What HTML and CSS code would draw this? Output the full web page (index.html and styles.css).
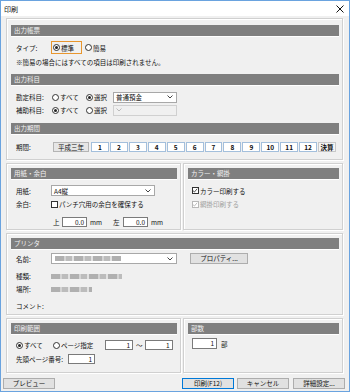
FILE: index.html
```html
<!DOCTYPE html>
<html lang="ja">
<head>
  <meta charset="UTF-8" />
  <title>印刷</title>
  <link rel="stylesheet" href="styles.css">
</head>
<body>
<div class="window">
  <div class="titlebar">
    <span class="title">印刷</span>
    <svg class="close" width="8" height="8" viewBox="0 0 8 8"><path d="M0.5 0.5 L7.5 7.5 M7.5 0.5 L0.5 7.5" stroke="#111" stroke-width="1"/></svg>
  </div>

  <div class="client">
    <!-- 出力帳票 / 出力科目 / 出力期間 -->
    <div class="frame top">
      <div class="bar">出力帳票</div>
      <div class="row r-type">
        <span class="lbl">タイプ:</span>
        <span class="focus"><span class="radio on"></span>標準</span>
        <span class="opt o-easy"><span class="radio"></span>簡易</span>
      </div>
      <div class="row r-note">※簡易の場合にはすべての項目は印刷されません。</div>

      <div class="bar b2">出力科目</div>
      <div class="row r-acc">
        <span class="lbl l-acc">勘定科目:</span>
        <span class="opt o-all"><span class="radio"></span>すべて</span>
        <span class="opt o-sel"><span class="radio on"></span>選択</span>
        <span class="select s-acc">普通預金<svg class="chev" width="6" height="4" viewBox="0 0 6 4"><path d="M0.5 0.5 L3 3 L5.5 0.5" fill="none" stroke="#444"/></svg></span>
      </div>
      <div class="row r-sub">
        <span class="lbl l-acc">補助科目:</span>
        <span class="opt o-all"><span class="radio on"></span>すべて</span>
        <span class="opt o-sel"><span class="radio"></span>選択</span>
        <span class="select s-acc off"><svg class="chev" width="6" height="4" viewBox="0 0 6 4"><path d="M0.5 0.5 L3 3 L5.5 0.5" fill="none" stroke="#bbb"/></svg></span>
      </div>

      <div class="bar b2">出力期間</div>
      <div class="row r-period">
        <span class="lbl l-period">期間:</span>
        <span class="pbtn year">平成三年</span>
        <div class="months">
          <span class="pbtn">1</span>
          <span class="pbtn">2</span>
          <span class="pbtn">3</span>
          <span class="pbtn">4</span>
          <span class="pbtn">5</span>
          <span class="pbtn">6</span>
          <span class="pbtn">7</span>
          <span class="pbtn">8</span>
          <span class="pbtn">9</span>
          <span class="pbtn">10</span>
          <span class="pbtn">11</span>
          <span class="pbtn">12</span>
          <span class="pbtn final">決算</span>
        </div>
      </div>
    </div>

    <!-- 用紙・余白 / カラー・網掛 -->
    <div class="pair p-paper">
      <div class="group g-left">
        <div class="bar">用紙・余白</div>
        <div class="row r-paper">
          <span class="lbl">用紙:</span>
          <span class="select s-paper">A4縦<svg class="chev" width="6" height="4" viewBox="0 0 6 4"><path d="M0.5 0.5 L3 3 L5.5 0.5" fill="none" stroke="#444"/></svg></span>
        </div>
        <div class="row r-margin">
          <span class="lbl">余白:</span>
          <span class="check"></span>パンチ穴用の余白を確保する
        </div>
        <div class="row r-mm">
          <span class="unit u-top">上</span>
          <span class="box b-mm">0.0</span>
          <span class="mm">mm</span>
          <span class="unit u-left">左</span>
          <span class="box b-mm">0.0</span>
          <span class="mm">mm</span>
        </div>
      </div>
      <div class="group g-right">
        <div class="bar">カラー・網掛</div>
        <div class="row r-color">
          <span class="check on"><svg width="7" height="7" viewBox="0 0 7 7"><path d="M1 3.5 L2.8 5.3 L6 1.5" fill="none" stroke="#222" stroke-width="0.9"/></svg></span>カラー印刷する
        </div>
        <div class="row r-shade dim">
          <span class="check on off"><svg width="7" height="7" viewBox="0 0 7 7"><path d="M1 3.5 L2.8 5.3 L6 1.5" fill="none" stroke="#aaa" stroke-width="0.9"/></svg></span>網掛印刷する
        </div>
      </div>
    </div>

    <!-- プリンタ -->
    <div class="group g-printer">
      <div class="bar">プリンタ</div>
      <div class="row r-name">
        <span class="lbl">名前:</span>
        <span class="select s-printer"><span class="blur bl-name"></span><svg class="chev" width="6" height="4" viewBox="0 0 6 4"><path d="M0.5 0.5 L3 3 L5.5 0.5" fill="none" stroke="#444"/></svg></span>
        <span class="btn b-prop">プロパティ...</span>
      </div>
      <div class="row r-kind">
        <span class="lbl">種類:</span>
        <span class="blur bl-kind"></span>
      </div>
      <div class="row r-place">
        <span class="lbl">場所:</span>
        <span class="blur bl-place"></span>
      </div>
      <div class="row r-comment">
        <span class="lbl">コメント:</span>
      </div>
    </div>

    <!-- 印刷範囲 / 部数 -->
    <div class="pair p-range">
      <div class="group g-left">
        <div class="bar">印刷範囲</div>
        <div class="row r-range">
          <span class="opt o-every"><span class="radio on"></span>すべて</span>
          <span class="opt o-page"><span class="radio"></span>ページ指定</span>
          <span class="box b-page">1</span>
          <span class="tilde">～</span>
          <span class="box b-page">1</span>
        </div>
        <div class="row r-first">
          <span class="lbl l-first">先頭ページ番号:</span>
          <span class="box b-first">1</span>
        </div>
      </div>
      <div class="group g-right">
        <div class="bar">部数</div>
        <div class="row r-copies">
          <span class="box b-copies">1</span>
          <span class="bu">部</span>
        </div>
      </div>
    </div>

    <div class="footer">
      <span class="btn b-preview">プレビュー</span>
      <span class="spacer"></span>
      <span class="btn b-print">印刷(F12)</span>
      <span class="btn b-cancel">キャンセル</span>
      <span class="btn b-detail">詳細設定...</span>
    </div>
  </div>
</div>
</body>
</html>
```

FILE: styles.css
```css
* {
  box-sizing: border-box;
}
body {
  margin: 0;
  font-family: "Noto Sans CJK JP", "Noto Sans", sans-serif;
  font-size: 6.5px;
  color: #111;
}
.window {
  width: 350px;
  height: 392px;
  border: 1px solid #6aa3df;
  background: #f0f0f0;
  display: flex;
  flex-direction: column;
}
.titlebar {
  height: 15px;
  background: #fff;
  display: flex;
  align-items: center;
  justify-content: space-between;
  padding: 0 5px 0 3px;
}
.title {
  font-size: 7px;
}
.client {
  flex: 1;
  padding: 2px 6px 0 5px;
}

/* frames and group boxes */
.frame, .group {
  border: 1px solid #d0d0d0;
  box-shadow: inset 1px 1px 0 #fff, 1px 1px 0 #fff;
}
.frame.top {
  height: 142px;
  padding: 6px 3px 0 4px;
}
.group {
  padding: 4px 3px 0 4px;
}
.pair {
  display: flex;
  gap: 2px;
  margin-top: 3px;
}
.g-left {
  width: 175px;
}
.g-right {
  flex: 1;
}
.p-paper .group {
  height: 67px;
}
.g-printer {
  margin-top: 3px;
  height: 82px;
}
.p-range .group {
  height: 55px;
}
.bar {
  height: 11px;
  line-height: 11px;
  background: #7f7f7f;
  color: #f2f2f2;
  padding-left: 3px;
  box-shadow: 0 1px 0 #fff;
}
.bar.b2 {
  margin-top: 7px;
}

/* rows */
.row {
  display: flex;
  align-items: center;
  padding-left: 5px;
  white-space: nowrap;
}
.g-right .row {
  padding-left: 4px;
}
.lbl {
  width: 35px;
  flex: none;
}
.l-acc {
  width: 36px;
}
.l-period {
  width: 37px;
}
.l-first {
  width: 52px;
}
.r-type {
  height: 13px;
  margin-top: 5px;
}
.r-note {
  height: 10px;
  margin-top: 3px;
}
.r-acc {
  height: 12px;
  margin-top: 6px;
}
.r-sub {
  height: 12px;
  margin-top: 1px;
}
.r-period {
  height: 10px;
  margin-top: 8px;
}
.r-paper, .r-color {
  height: 11px;
  margin-top: 6px;
}
.r-margin, .r-shade {
  height: 10px;
  margin-top: 3px;
}
.r-mm {
  height: 10px;
  margin-top: 8px;
}
.r-name {
  height: 11px;
  margin-top: 4px;
}
.r-kind {
  height: 10px;
  margin-top: 7px;
}
.r-place {
  height: 10px;
  margin-top: 3px;
}
.r-comment {
  height: 10px;
  margin-top: 7px;
}
.r-range {
  height: 10px;
  margin-top: 6px;
}
.r-first {
  height: 10px;
  margin-top: 4px;
}
.r-copies {
  height: 11px;
  margin-top: 4px;
}
.dim {
  color: #a0a0a0;
}

/* radios and checks */
.opt {
  display: flex;
  align-items: center;
  flex: none;
}
.radio {
  width: 7px;
  height: 7px;
  border: 1px solid #333;
  border-radius: 50%;
  background: #fff;
  margin-right: 1px;
  position: relative;
  flex: none;
}
.radio.on::after {
  content: "";
  position: absolute;
  left: 1px;
  top: 1px;
  width: 3px;
  height: 3px;
  border-radius: 50%;
  background: #222;
}
.focus {
  display: flex;
  align-items: center;
  width: 31px;
  height: 13px;
  border: 1px solid #e8962e;
  padding-left: 1px;
}
.o-easy {
  margin-left: 3px;
}
.o-all {
  width: 34px;
}
.o-sel {
  width: 27px;
}
.o-every {
  width: 37px;
}
.o-page {
  width: 52px;
}
.check {
  width: 7px;
  height: 7px;
  border: 1px solid #333;
  background: #fff;
  margin-right: 1px;
  flex: none;
  display: flex;
}
.check svg {
  margin: -1px 0 0 -1px;
}
.check.off {
  border-color: #b8b8b8;
}

/* selects, boxes, buttons */
.select {
  display: flex;
  align-items: center;
  justify-content: space-between;
  height: 10px;
  background: #fff;
  border: 1px solid #a8a8a8;
  padding: 0 3px 0 2px;
  flex: none;
}
.select.off {
  background: #f0f0f0;
  border-color: #d0d0d0;
}
.s-acc {
  width: 64px;
  height: 11px;
}
.s-paper {
  width: 104px;
  height: 11px;
}
.s-printer {
  width: 126px;
  height: 11px;
}
.box {
  height: 10px;
  background: #fff;
  border: 1px solid #7a7a7a;
  text-align: right;
  padding-right: 2px;
  line-height: 8px;
  flex: none;
}
.b-mm {
  width: 25px;
}
.u-top {
  margin-left: 37px;
  width: 9px;
}
.u-left {
  width: 10px;
}
.mm {
  margin: 0 11px 0 3px;
}
.b-page {
  width: 28px;
}
.tilde {
  margin: 0 2px 0 3px;
}
.b-first {
  width: 27px;
}
.b-copies {
  width: 25px;
  height: 11px;
}
.bu {
  margin-left: 4px;
}
.months {
  display: flex;
  gap: 1px;
  width: 245px;
  margin-left: 2px;
}
.pbtn {
  flex: 1;
  height: 10px;
  line-height: 8px;
  background: #fff;
  border: 1px solid #a3bfdc;
  text-align: center;
  font-weight: bold;
}
.pbtn.year {
  flex: none;
  width: 36px;
  background: #e6e6e6;
  border-color: #b4b4b4;
  font-weight: normal;
}
.pbtn.final {
  background: #f4f4f4;
  border-color: #c8c8c8;
}
.btn {
  height: 11px;
  line-height: 9px;
  text-align: center;
  background: #e1e1e1;
  border: 1px solid #adadad;
  flex: none;
}
.b-prop {
  width: 58px;
  margin-left: 13px;
}
.footer {
  display: flex;
  margin-top: 5px;
}
.spacer {
  flex: 1;
}
.b-preview {
  width: 52px;
  margin-left: -3px;
}
.b-print {
  width: 52px;
  border-color: #0078d7;
}
.b-cancel {
  width: 52px;
  margin-left: 3px;
}
.b-detail {
  width: 52px;
  margin: 0 -2px 0 4px;
}

/* masked printer info */
.blur {
  height: 5px;
  background: repeating-linear-gradient(90deg, #b0b0b0 0 9px, #d4d4d4 9px 11px, #bcbcbc 11px 17px, #e2e2e2 17px 19px);
  filter: blur(0.6px);
}
.bl-name {
  width: 66px;
  margin-left: 1px;
}
.bl-kind {
  width: 71px;
}
.bl-place {
  width: 41px;
}
```
